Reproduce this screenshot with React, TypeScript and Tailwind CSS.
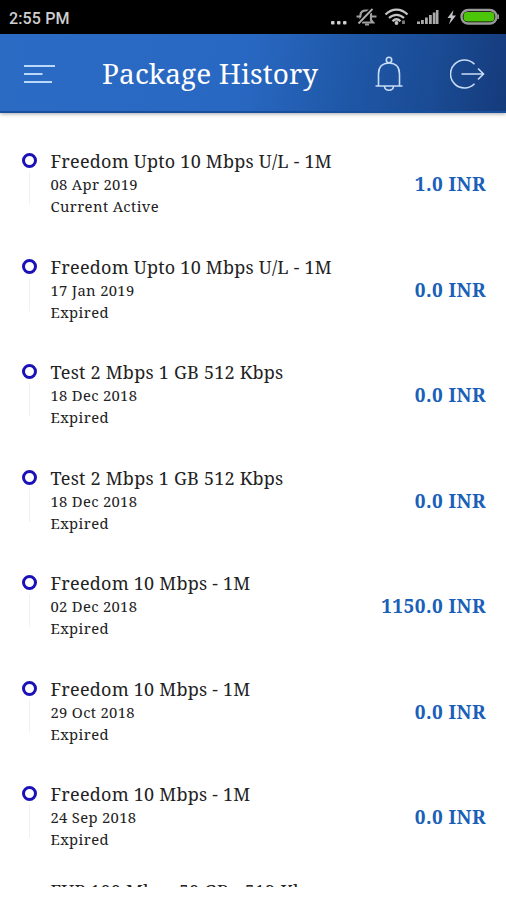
const packages = [
  { name: "Freedom Upto 10 Mbps U/L - 1M", date: "08 Apr 2019", status: "Current Active", price: "1.0 INR" },
  { name: "Freedom Upto 10 Mbps U/L - 1M", date: "17 Jan 2019", status: "Expired", price: "0.0 INR" },
  { name: "Test 2 Mbps 1 GB 512 Kbps", date: "18 Dec 2018", status: "Expired", price: "0.0 INR" },
  { name: "Test 2 Mbps 1 GB 512 Kbps", date: "18 Dec 2018", status: "Expired", price: "0.0 INR" },
  { name: "Freedom 10 Mbps - 1M", date: "02 Dec 2018", status: "Expired", price: "1150.0 INR" },
  { name: "Freedom 10 Mbps - 1M", date: "29 Oct 2018", status: "Expired", price: "0.0 INR" },
  { name: "Freedom 10 Mbps - 1M", date: "24 Sep 2018", status: "Expired", price: "0.0 INR" },
];

function StatusBar() {
  return (
    <div className="flex h-[34px] shrink-0 items-center justify-between bg-black pl-[9px] pr-[7px] pt-[2px]">
      <span className="mt-[1px] font-['Roboto',sans-serif] text-[16px] font-medium leading-none tracking-[0.15px] text-[#cfcfcf]">2:55 PM</span>
      <svg width="170" height="24" viewBox="0 0 170 24" fill="none">
        {/* more */}
        <g fill="#d0d0d0">
          <rect x="2" y="15" width="3.5" height="3.5" rx="1" />
          <rect x="8" y="15" width="3.5" height="3.5" rx="1" />
          <rect x="14" y="15" width="3.5" height="3.5" rx="1" />
        </g>
        {/* muted bell */}
        <g stroke="#a0a0a0" strokeWidth="2.2">
          <path d="M31.500 14.500V9C31.500 6 34 4.500 37 4.500H40" />
          <path d="M42 7V14L44 16.500H33" />
          <path d="M36 18.500H40M27.500 10.500H31M43 10.500H47.500" />
        </g>
        <path d="M29.500 17L42.500 3.500" stroke="#000" strokeWidth="4" />
        <path d="M29.500 17.5L43.500 3" stroke="#b0b0b0" strokeWidth="1.8" />
        {/* wifi */}
        <g stroke="#c4c4c4" strokeWidth="2.3">
          <path d="M56.5 8.500C63 2 72 2 78.500 8.500" />
          <path d="M60 12C64.500 7.700 70.500 7.700 75 12" />
          <path d="M63.500 15.200C66 12.700 69 12.700 71.500 15.200" />
        </g>
        <circle cx="67.500" cy="17" r="1.900" fill="#c4c4c4" />
        <path d="M73 14.500h3v3.500h-3z" fill="#777" />
        {/* signal */}
        <g fill="#ababab">
          <rect x="88" y="15.500" width="3" height="2.500" />
          <rect x="92" y="14" width="2.800" height="4" />
          <rect x="96" y="11.500" width="2.800" height="6.500" />
          <rect x="100" y="9" width="2.800" height="9" />
          <rect x="103.800" y="6.500" width="2.800" height="11.500" />
          <rect x="107" y="4" width="2.500" height="14" />
        </g>
        {/* charging */}
        <path d="M124.500 4L118.500 12H122L120 18.500L127 9.500H123.300Z" fill="#c4c4c4" />
        <rect x="132.500" y="4" width="35" height="13.500" rx="6.700" stroke="#999" strokeWidth="2.400" />
        <rect x="134.500" y="6" width="31" height="9.500" rx="4" fill="#4dc60a" />
        <path d="M169.200 8.500v4.500" stroke="#999" strokeWidth="1.600" />
      </svg>
    </div>
  );
}

function Header() {
  return (
    <header className="z-10 flex h-[79px] shrink-0 items-center border-b-2 border-[#174f9f] bg-linear-[100deg,#2b6bc4_0%,#2968c2_48%,#1f58a8_68%,#1a4b94_85%,#153b7b_100%] pl-[24px] pr-[21px] shadow-[0_1px_4px_rgba(0,0,0,0.35)]">
      <svg className="mt-[3px]" width="32" height="22" viewBox="0 0 32 22" stroke="#b9d8fa" strokeWidth="1.8">
        <path d="M0 3h31M0 11h18.500M0 19h28" />
      </svg>
      <h1 className="ml-[46px] mt-[1px] grow whitespace-nowrap font-['Noto_Serif','DejaVu_Serif_Condensed','DejaVu_Serif',serif] text-[28px] leading-none tracking-[0.1px] text-white">Package History</h1>
      <svg className="mt-[3px]" width="28" height="36" viewBox="0 0 28 36" fill="none" stroke="#c8dcf8" strokeWidth="1.6">
        <circle cx="14" cy="4" r="2.700" />
        <path d="M3.500 29.500V18C3.500 10.500 8 7 14 7S24.500 10.500 24.500 18V29.500M0.500 30H27.500M9.500 30.500C10 35.500 18 35.500 18.500 30.500" />
      </svg>
      <svg className="ml-[47px] mt-[2px]" width="35" height="32" viewBox="0 0 35 32" fill="none" stroke="#c8dcf8" strokeWidth="1.6">
        <path d="M24.500 6.200A14 14 0 1 0 24.500 25.800M11.500 16H33.500M28 10.500L33.500 16L28 21.500" />
      </svg>
    </header>
  );
}

export default function App() {
  return (
    <div className="flex h-[900px] w-[506px] flex-col overflow-hidden bg-white">
      <StatusBar />
      <Header />
      <main className="h-[774px] shrink-0 overflow-hidden pt-[36px] font-['Noto_Serif','DejaVu_Serif_Condensed','DejaVu_Serif',serif]">
        {packages.map((p, i) => (
          <div key={i} className="flex h-[105.5px] pl-[21.5px] pr-[20px]">
            <div className="flex w-[15px] shrink-0 flex-col items-center pt-[4px]">
              <span className="size-[15px] shrink-0 rounded-full border-[3px] border-[#1a12b8]" />
              <span className="mt-[4px] h-[33px] w-px bg-[#f1f1f1]" />
            </div>
            <div className="ml-[14px] grow whitespace-nowrap pt-[0.4px] text-[#222]">
              <p className="text-[18px] leading-[24px] tracking-[0.23px]">{p.name}</p>
              <p className="text-[14.8px] leading-[22px] tracking-[0.32px]">{p.date}</p>
              <p className="text-[14.8px] leading-[22px] tracking-[0.42px]">{p.status}</p>
            </div>
            <p className="mt-[22px] whitespace-nowrap text-[19px] font-bold leading-[26px] tracking-[0.45px] text-[#1a5fb8]">{p.price}</p>
          </div>
        ))}
        {/* next entry, cut by the bottom of the list */}
        <p className="-mt-[9px] ml-[50.5px] whitespace-nowrap text-[18px] leading-[25px] tracking-[0.19px] text-[#222]">FUP 100 Mbps 50 GB - 512 Kbps</p>
      </main>
    </div>
  );
}
